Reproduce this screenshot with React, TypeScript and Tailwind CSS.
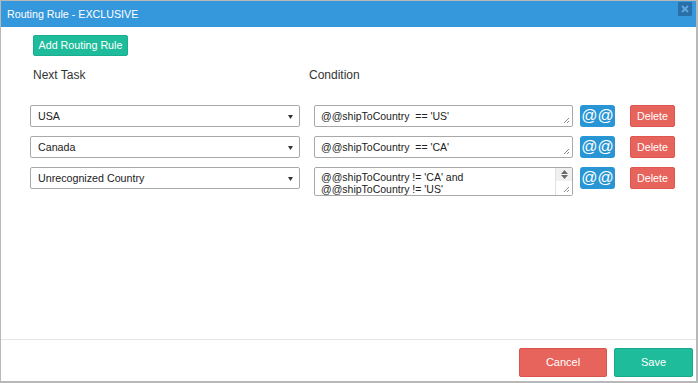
import React from 'react';

const font = { fontFamily: '"Liberation Sans", Arial, sans-serif' };

type Rule = { task: string; lines: string[]; tall?: boolean };

const rules: Rule[] = [
  { task: 'USA', lines: ["@@shipToCountry  == 'US'"] },
  { task: 'Canada', lines: ["@@shipToCountry  == 'CA'"] },
  { task: 'Unrecognized Country', lines: ["@@shipToCountry != 'CA' and", "@@shipToCountry != 'US'"], tall: true },
];

function Grip() {
  return (
    <svg width="7" height="7" viewBox="0 0 7 7" className="absolute right-[2px] bottom-[2px]">
      <path d="M6 1 L1 6 M6 4 L4 6" stroke="#8a8a8a" strokeWidth="1" />
    </svg>
  );
}

function RuleRow({ rule }: { rule: Rule }) {
  return (
    <div className="flex items-start">
      <div className="relative w-[270px] h-[22px] border border-[#a9a9a9] rounded-[2px] bg-white flex items-center pl-[7px] text-[10.7px] text-[#222]">
        {rule.task}
        <svg width="5" height="4" viewBox="0 0 5 4" className="absolute right-[6px] top-[9px]">
          <path d="M0 0 H5 L2.5 4 Z" fill="#333" />
        </svg>
      </div>
      <div
        className={`relative ml-[14px] w-[259px] border border-[#a9a9a9] rounded-[2px] bg-white pl-[6px] text-[10.5px] text-[#222] ${
          rule.tall ? 'h-[29px] pt-[3px] leading-[12px]' : 'h-[22px] pt-[3px] leading-[14px]'
        }`}
      >
        {rule.lines.map((l) => (
          <div key={l} className="whitespace-pre">{l}</div>
        ))}
        {rule.tall && (
          <div className="absolute right-0 top-0 bottom-0 w-[17px] border-l border-[#e2e2e2] bg-white">
            <div className="h-[13px] bg-[#f0f0f0] flex flex-col items-center justify-center">
              <svg width="7" height="9" viewBox="0 0 7 9">
                <path d="M0 4 L3.5 0 L7 4 Z M0 5 L7 5 L3.5 9 Z" fill="#6b6b6b" />
              </svg>
            </div>
          </div>
        )}
        <Grip />
      </div>
      <button className="ml-[7px] w-[35px] h-[22px] rounded-[3px] bg-[#2896d5] text-white text-[16px] leading-none flex items-center justify-center">
        @@
      </button>
      <button className="ml-[15px] w-[45px] h-[22px] rounded-[2px] bg-[#e7645c] border border-[#dd5750] text-white text-[10.7px] flex items-center justify-center">
        Delete
      </button>
    </div>
  );
}

export default function App() {
  return (
    <div style={font} className="w-[698px] h-[383px] bg-white">
      <div className="w-[698px] h-[383px] flex flex-col border-l border-t border-b-2 border-r-2 border-[#b8b8b8]">
        {/* Header */}
        <div className="h-[26px] bg-[#3598dc] flex items-start justify-between pl-[6px] pr-[4px]">
          <span className="text-white text-[10.7px] mt-[5px]">Routing Rule - EXCLUSIVE</span>
          <div className="mt-[1px] w-[14px] h-[14px] bg-[#2a6fa8] rounded-[1px] flex items-center justify-center">
            <svg width="8" height="8" viewBox="0 0 8 8">
              <path d="M1 1 L7 7 M7 1 L1 7" stroke="#5ea9e0" strokeWidth="2" />
            </svg>
          </div>
        </div>

        {/* Body */}
        <div className="flex-1 pt-[8px] pl-[29px]">
          <button className="ml-[3px] w-[95px] h-[21px] rounded-[2px] bg-[#1fbc9c] border border-[#1aae90] text-white text-[10.7px] flex items-center justify-center">
            Add Routing Rule
          </button>
          <div className="mt-[12px] pl-[3px] flex text-[12px] leading-[14px] text-[#333]">
            <span className="w-[276px]">Next Task</span>
            <span>Condition</span>
          </div>
          <div className="mt-[23px] flex flex-col gap-[9px]">
            {rules.map((r) => (
              <RuleRow key={r.task} rule={r} />
            ))}
          </div>
        </div>

        {/* Footer */}
        <div className="h-[42px] border-t border-[#e5e5e5] flex items-start justify-end gap-[7px] pt-[8px] pr-[3px]">
          <button className="w-[88px] h-[29px] rounded-[2px] bg-[#e7645c] border border-[#d9534f] text-white text-[11px]">
            Cancel
          </button>
          <button className="w-[79px] h-[29px] rounded-[2px] bg-[#1fbc9c] border border-[#19a98b] text-white text-[11px]">
            Save
          </button>
        </div>
      </div>
    </div>
  );
}
